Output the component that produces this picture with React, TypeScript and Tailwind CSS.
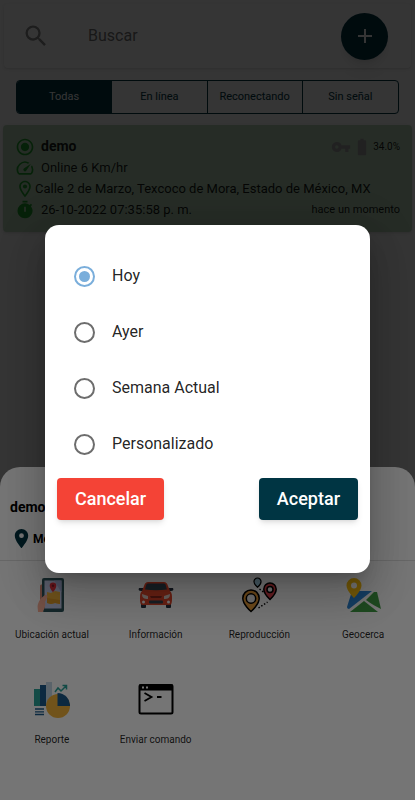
import { useState } from "react";
import type { ReactNode } from "react";
import {
  MdAdd,
  MdBatteryFull,
  MdLocationOn,
  MdOutlineLocationOn,
  MdOutlineSpeed,
  MdRadioButtonChecked,
  MdSearch,
  MdTimer,
  MdVpnKey,
} from "react-icons/md";

const FILTERS = ["Todas", "En línea", "Reconectando", "Sin señal"];
const PERIODS = ["Hoy", "Ayer", "Semana Actual", "Personalizado"];

function PhoneMapIcon() {
  return (
    <svg viewBox="0 0 36 36" className="size-9" aria-hidden="true">
      <path d="M6 9c0-2 3-2 3 0v14H6z" fill="#d98b78" />
      <rect x="8" y="1" width="22" height="34" rx="2" fill="#2f555c" />
      <rect x="10.500" y="3.500" width="17" height="28" fill="#c9d0ee" />
      <path d="M20 3.500h7.500v12z" fill="#aab3dd" />
      <path d="M13 15l4 1 4-2 5 1v12l-5-1-4 1-4-1z" fill="#f5b53b" />
      <path d="M13 21l13 2v4l-5-1-4 1-4-1z" fill="#e59f2b" />
      <path d="M19 5.500a3.300 3.300 0 0 0-3.300 3.300c0 2.700 3.300 6.500 3.300 6.500s3.300-3.800 3.300-6.500A3.300 3.300 0 0 0 19 5.500z" fill="#e5333f" />
      <circle cx="19" cy="8.800" r="1.200" fill="#8f1f30" />
      <path d="M11 18c2-1 3 1 2 3l-2 4c1 4-1 7-2 10H4c0-3-1-5 0-8 1-4 4-7 7-9z" fill="#fdb19a" />
    </svg>
  );
}

function CarIcon() {
  return (
    <svg viewBox="0 0 36 36" className="size-9" aria-hidden="true">
      <rect x="3" y="25" width="5" height="6" rx="1" fill="#28343f" />
      <rect x="28" y="25" width="5" height="6" rx="1" fill="#28343f" />
      <path d="M1 11h4l1 3H3c-2 0-3-1-2-3zM35 11h-4l-1 3h3c2 0 3-1 2-3z" fill="#28343f" />
      <path d="M10 5h16c2 0 3 1 4 4l2 5c2 2 2 4 2 8 0 5-1 6-3 6H5c-2 0-3-1-3-6 0-4 0-6 2-8l2-5c1-3 2-4 4-4z" fill="#e4492d" />
      <path d="M10 6.500h16c2 0 2 3 3 6-7 1-15 1-22 0 1-3 1-6 3-6z" fill="#354552" />
      <path d="M12 19h12l-1 2H13z" fill="#8f2b1e" />
      <rect x="11" y="23.500" width="14" height="3" rx="1" fill="#354552" />
      <path d="M4 17l6 2v3c-4 0-6-1-6-5zM32 17l-6 2v3c4 0 6-1 6-5z" fill="#e3d2c8" />
      <circle cx="5.500" cy="25" r="1.500" fill="#fff" />
      <circle cx="30.500" cy="25" r="1.500" fill="#fff" />
    </svg>
  );
}

function RoutePinsIcon() {
  return (
    <svg viewBox="0 0 36 36" className="size-9" aria-hidden="true" stroke="#000" strokeWidth="1.500">
      <path d="M16.500 1a3.500 3.500 0 0 0-3.500 3.700c0 2.600 3.500 5.600 3.500 5.600s3.500-3 3.500-5.600A3.500 3.500 0 0 0 16.500 1z" fill="#9fcbe0" strokeWidth="1.200" />
      <path d="M29 6a6.200 6.200 0 0 0-6.200 6.200C22.800 16.500 29 22.500 29 22.500s6.200-6 6.200-10.300A6.200 6.200 0 0 0 29 6z" fill="#e0434b" />
      <circle cx="29" cy="12.500" r="3" fill="#f4f4f4" />
      <path d="M10 13a8.200 8.200 0 0 0-8.200 8.200C1.800 27.500 10 34.500 10 34.500s8.200-7 8.200-13.300A8.200 8.200 0 0 0 10 13z" fill="#f0a23c" />
      <circle cx="10" cy="21.500" r="4.700" fill="#f4f4f4" />
      <path d="M17.500 31l9-6M18.500 12l4 3" fill="none" strokeDasharray="1.500 1.800" />
    </svg>
  );
}

function GeofenceIcon() {
  return (
    <svg viewBox="-1 0 36 36" className="size-9" aria-hidden="true">
      <path d="M6 14h20L3 32c-1 0-2-1-2-2z" fill="#2c86d6" />
      <path d="M28 15h3l4 17c-4-2-10-5-15-9z" fill="#43a047" />
      <path d="M18 24l14 11H4z" fill="#43a047" />
      <path d="M8 1a7.500 7.500 0 0 0-7.500 7.500C.5 14 8 21 8 21s7.500-7 7.500-12.500A7.500 7.500 0 0 0 8 1z" fill="#fbc112" />
      <circle cx="8" cy="8.500" r="3" fill="#fff" />
    </svg>
  );
}

function ReportIcon() {
  return (
    <svg viewBox="0 0 36 36" className="size-9" aria-hidden="true">
      <rect x="0" y="7" width="6" height="17" fill="#2ba39a" />
      <rect x="6" y="3" width="6" height="21" fill="#1b5b8d" />
      <rect x="12" y="0" width="6" height="24" fill="#c5d7e6" />
      <path d="M1 27h9M1 29.800h9M1 32.500h9" stroke="#1b5b8d" strokeWidth="1.300" />
      <circle cx="24" cy="24" r="12" fill="#f6b63c" />
      <path d="M23.500 11v13h12.500A12.500 12.500 0 0 0 23.500 11z" fill="#1b5b8d" />
      <path d="M21 10l3-4 3 3 5-5M28.500 3.500h4v4" fill="none" stroke="#2ba39a" strokeWidth="1.500" />
    </svg>
  );
}

function TerminalIcon() {
  return (
    <svg viewBox="0 0 36 36" className="size-9" aria-hidden="true">
      <rect x="1.500" y="3" width="33" height="28.500" rx="1.500" fill="none" stroke="#000" strokeWidth="2" />
      <path d="M1 2.500h34v6H1z" fill="#000" />
      <path d="M4 4.500h2v2H4zM8 4.500h2v2H8z" fill="#fff" />
      <path d="M6.500 11l7 4-7 4M19 15h4.500" fill="none" stroke="#000" strokeWidth="1.800" />
    </svg>
  );
}

const ACTIONS: { label: string; icon: ReactNode }[] = [
  { label: "Ubicación actual", icon: <PhoneMapIcon /> },
  { label: "Información", icon: <CarIcon /> },
  { label: "Reproducción", icon: <RoutePinsIcon /> },
  { label: "Geocerca", icon: <GeofenceIcon /> },
  { label: "Reporte", icon: <ReportIcon /> },
  { label: "Enviar comando", icon: <TerminalIcon /> },
];

function SearchBar() {
  return (
    <div className="mx-1 flex h-16 items-center rounded bg-white pr-[23px] pl-[18px] shadow">
      <label htmlFor="buscar">
        <MdSearch className="size-7 text-[#8a8a8a]" />
      </label>
      <input
        id="buscar"
        type="search"
        placeholder="Buscar"
        className="ml-[38px] min-w-0 flex-1 bg-transparent text-base outline-none placeholder:text-[#757575]"
      />
      <button
        type="button"
        aria-label="Agregar"
        className="flex size-[47px] items-center justify-center rounded-full bg-[#003543] text-white shadow-lg"
      >
        <MdAdd className="size-6" />
      </button>
    </div>
  );
}

function FilterTabs() {
  const [active, setActive] = useState("Todas");
  return (
    <div className="mx-4 mt-3 grid h-[34px] grid-cols-4 divide-x divide-[#003543] overflow-hidden rounded border border-[#003543]">
      {FILTERS.map((filter) => (
        <button
          key={filter}
          type="button"
          onClick={() => setActive(filter)}
          className={
            filter === active
              ? "bg-[#003543] text-[11px] text-white"
              : "text-[11px] text-[#003543]"
          }
        >
          {filter}
        </button>
      ))}
    </div>
  );
}

function DeviceCard() {
  return (
    <article className="mx-[3px] mt-[11px] rounded bg-[#b6d4b7] px-3 pt-[11px] pb-3 text-[13px] leading-[21px] text-black/87 shadow">
      <div className="flex items-center">
        <MdRadioButtonChecked className="size-5 text-[#229f2c]" />
        <h2 className="ml-[6px] text-sm leading-[21px] font-bold">demo</h2>
        <MdVpnKey className="ml-auto size-5 text-[#9e9e9e]" />
        <MdBatteryFull className="ml-px size-5 text-[#9e9e9e]" />
        <span className="ml-px text-[10px]">34.0%</span>
      </div>
      <div className="flex items-center">
        <MdOutlineSpeed className="size-5 text-[#229f2c]" />
        <p className="ml-[6px]">Online 6 Km/hr</p>
      </div>
      <div className="flex items-center">
        <MdOutlineLocationOn className="size-5 text-[#229f2c]" />
        <p className="whitespace-nowrap">Calle 2 de Marzo, Texcoco de Mora, Estado de México, MX</p>
      </div>
      <div className="flex items-center">
        <MdTimer className="size-5 text-[#229f2c]" />
        <p className="ml-[6px]">26-10-2022 07:35:58 p. m.</p>
        <span className="ml-auto text-[11px]">hace un momento</span>
      </div>
    </article>
  );
}

function ActionSheet() {
  return (
    <section className="h-[333px] rounded-t-[20px] bg-white">
      <h2 className="px-[10px] pt-[30px] text-sm leading-5 font-bold">demo</h2>
      <div className="flex h-11 items-center border-b border-[#e0e0e0] px-[10px]">
        <MdLocationOn className="size-[23px] text-[#003543]" />
        <p className="text-xs font-bold">México</p>
      </div>
      <div className="grid grid-cols-4 gap-y-[38px] pt-4">
        {ACTIONS.map(({ label, icon }) => (
          <button key={label} type="button" className="flex flex-col items-center">
            {icon}
            <span className="mt-[13px] text-[10px] leading-[18px] text-black/87">{label}</span>
          </button>
        ))}
      </div>
    </section>
  );
}

function PeriodDialog() {
  const [period, setPeriod] = useState("Hoy");
  return (
    <form
      role="dialog"
      aria-label="Periodo"
      className="w-full rounded-[14px] bg-white px-3 pt-[23px] pb-[53px] shadow-[0_11px_15px_-7px_rgba(0,0,0,0.2),0_24px_38px_3px_rgba(0,0,0,0.14),0_9px_46px_8px_rgba(0,0,0,0.12)]"
      onSubmit={(e) => e.preventDefault()}
    >
      {PERIODS.map((name) => (
        <label key={name} className="flex h-14 items-center gap-[17px] pl-[17px] text-base text-black/87">
          <input
            type="radio"
            name="periodo"
            checked={period === name}
            onChange={() => setPeriod(name)}
            className="grid size-[21px] appearance-none place-items-center rounded-full border-2 border-[#6d6d6d] before:size-[11px] before:rounded-full checked:border-[#7aaedb] checked:before:bg-[#7aaedb]"
          />
          {name}
        </label>
      ))}
      <div className="mt-[6px] flex justify-between">
        <button
          type="button"
          className="h-[42px] rounded bg-[#f44336] px-[18px] text-lg font-medium text-white shadow-md"
        >
          Cancelar
        </button>
        <button
          type="submit"
          className="h-[42px] rounded bg-[#003543] px-[18px] text-lg font-medium text-white shadow-md"
        >
          Aceptar
        </button>
      </div>
    </form>
  );
}

export default function App() {
  return (
    <div className="relative min-h-screen bg-[#fafafa] font-[Roboto,sans-serif]">
      <main className="pt-1">
        <SearchBar />
        <FilterTabs />
        <DeviceCard />
      </main>
      <div className="absolute inset-0 flex flex-col justify-end bg-black/54">
        <ActionSheet />
      </div>
      <div className="absolute inset-0 flex items-center bg-black/54 px-[45px] pb-[2px]">
        <PeriodDialog />
      </div>
    </div>
  );
}
